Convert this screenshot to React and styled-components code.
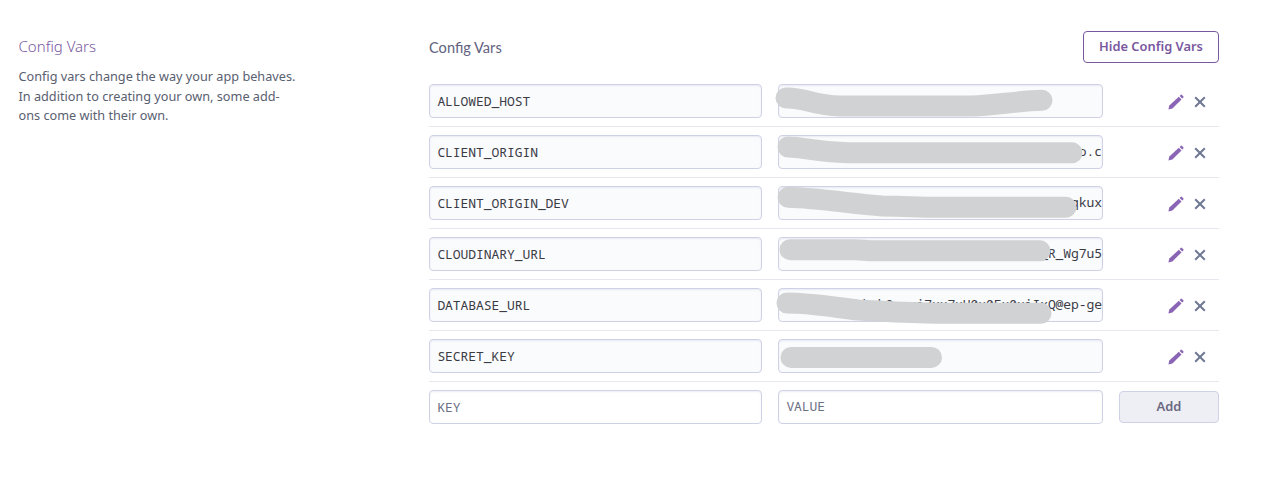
import React from 'react';
import styled, { createGlobalStyle } from 'styled-components';

const GlobalStyle = createGlobalStyle`
  * { box-sizing: border-box; }
  body { margin: 0; background: #fff; font-family: "Noto Sans", "Open Sans", sans-serif; }
`;

const Page = styled.main`
  display: grid;
  grid-template-columns: 410.5px 790px;
  padding: 31px 0 0 18.5px;
  min-height: 489px;
`;

const Aside = styled.aside`
  padding-top: 5px;
`;

const Title = styled.h2`
  margin: 0 0 10px;
  font: 300 15px/21px "Noto Sans", sans-serif;
  color: #79589f;
`;

const Description = styled.p`
  margin: 0;
  width: 290px;
  font-size: 12.7px;
  line-height: 19.5px;
  color: #596070;
`;

const Panel = styled.section`
  display: flex;
  flex-direction: column;
`;

const PanelHeader = styled.header`
  display: flex;
  justify-content: space-between;
  height: 45px;
`;

const PanelTitle = styled.h3`
  margin: 7px 0 0;
  font: 400 14.6px/20px Lato, sans-serif;
  color: #62627e;
`;

const Button = styled.button`
  display: flex;
  align-items: center;
  justify-content: center;
  width: ${(p) => p.$width}px;
  height: 32px;
  padding: 0 0 2px;
  border: 1px solid ${(p) => (p.$muted ? '#cfd2e6' : '#79589f')};
  border-radius: 4px;
  background: ${(p) => (p.$muted ? '#eeeff5' : '#fff')};
  color: ${(p) => (p.$muted ? '#6b6880' : '#79589f')};
  font: 600 12.9px/18px "Noto Sans", sans-serif;
`;

const Row = styled.div`
  display: grid;
  grid-template-columns: 333px 325px 100px;
  column-gap: 16px;
  align-items: center;
  height: 51px;
  border-bottom: 1px solid ${(p) => (p.$last ? 'transparent' : '#e6e7f0')};
`;

const Cell = styled.div`
  position: relative;
`;

const Input = styled.input`
  display: block;
  width: 100%;
  height: 34px;
  padding: 0 0 ${(p) => p.$lift || 0}px ${(p) => (p.$tail ? 0 : 7.4)}px;
  border: 1px solid #cfd2e6;
  border-radius: 4px;
  background: ${(p) => (p.readOnly ? '#fafbfd' : '#fff')};
  box-shadow: inset 0 1px 2px rgba(80, 90, 150, 0.1);
  color: #3a3b45;
  font: 13px "Noto Sans Mono", "Liberation Mono", monospace;
  letter-spacing: -0.07px;
  outline: none;
  text-align: ${(p) => (p.$tail ? 'right' : 'left')};
  &::placeholder { color: #6b6f85; opacity: 1; }
`;

const Mask = styled.svg`
  position: absolute;
  left: 0;
  top: 0;
  width: 325px;
  height: 34px;
  overflow: visible;
  fill: none;
  stroke: #d1d2d4;
  stroke-width: 21;
  stroke-linecap: round;
  stroke-linejoin: round;
`;

const Actions = styled.div`
  display: flex;
  align-items: center;
  gap: 8px;
  padding: 2px 0 0 49px;
`;

const Icon = styled.svg`
  display: block;
  width: 16px;
  height: 16px;
`;

const vars = [
  { name: 'ALLOWED_HOST', value: '', mask: 'M8 14C25 13 35 21.5 62 22H194C218 21 240 17 264 16.3' },
  { name: 'CLIENT_ORIGIN', value: 'o.c', mask: 'M10 12C25 12 36 17 70 17.8H294' },
  { name: 'CLIENT_ORIGIN_DEV', value: 'qkux', mask: 'M10 11.3C40 12 75 18 104 20C120 20 130 21 155 21.2H288' },
  { name: 'CLOUDINARY_URL', value: '_R_Wg7u5', mask: 'M12 12.7H77C85 12.7 87 13.8 97 13.8H262' },
  { name: 'DATABASE_URL', value: 'xkxb0xxxi7xx7xH0x0Fx0xiIxQ@ep-ge', mask: 'M9 15C35 15 60 20 80 22C110 23.5 130 25 160 25.3H263' },
  { name: 'SECRET_KEY', value: '', mask: 'M13 18.4H153.5' },
];

const Pencil = () => (
  <Icon viewBox="0 0 16 16" fill="#8b65b5" aria-label="Edit">
    <path d="M.4 15.6 1.3 11.6 10.8 2.7 13.5 5.4 4.4 14.5Z" />
    <path d="M11.6 1.9 12.6.9Q13.3.3 14 .9L15.3 2.2Q15.9 2.9 15.3 3.6L14.3 4.6Z" />
  </Icon>
);

const Close = () => (
  <Icon viewBox="0 0 16 16" fill="none" stroke="#6f7893" strokeWidth="2" aria-label="Remove">
    <path d="M3.2 3.2 12.8 12.8M12.8 3.2 3.2 12.8" />
  </Icon>
);

export default function App() {
  return (
    <>
      <GlobalStyle />
      <Page>
        <Aside>
          <Title>Config Vars</Title>
          <Description>
            Config vars change the way your app behaves.<br />
            In addition to creating your own, some add-<br />
            ons come with their own.
          </Description>
        </Aside>
        <Panel>
          <PanelHeader>
            <PanelTitle>Config Vars</PanelTitle>
            <Button $width={136}>Hide Config Vars</Button>
          </PanelHeader>
          {vars.map((v) => (
            <Row key={v.name}>
              <Cell><Input readOnly value={v.name} /></Cell>
              <Cell>
                <Input readOnly $tail $lift={2} value={v.value} />
                <Mask viewBox="0 0 325 34"><path d={v.mask} /></Mask>
              </Cell>
              <Actions><Pencil /><Close /></Actions>
            </Row>
          ))}
          <Row $last>
            <Cell><Input placeholder="KEY" /></Cell>
            <Cell><Input $lift={2} placeholder="VALUE" /></Cell>
            <Button $muted $width={100}>Add</Button>
          </Row>
        </Panel>
      </Page>
    </>
  );
}
